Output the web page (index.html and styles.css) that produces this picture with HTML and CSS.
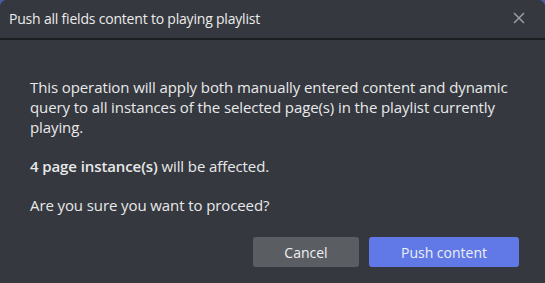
FILE: index.html
```html
<!DOCTYPE html>
<html>
<head>
<meta charset="utf-8">
<link rel="stylesheet" href="styles.css">
</head>
<body>
<div class="dialog">
  <div class="header">
    <span class="title">Push all fields content to playing playlist</span>
    <svg class="close" width="12" height="12" viewBox="0 0 12 12"><path d="M1 1L11 11M11 1L1 11" stroke="#9b9da1" stroke-width="1.5" fill="none"/></svg>
  </div>
  <div class="content">
    <p>This operation will apply both manually entered content and dynamic query to all instances of the selected page(s) in the playlist currently playing.</p>
    <p><b>4 page instance(s)</b> will be affected.</p>
    <p>Are you sure you want to proceed?</p>
  </div>
  <div class="footer">
    <button class="btn cancel">Cancel</button>
    <button class="btn primary">Push content</button>
  </div>
</div>
</body>
</html>
```
FILE: styles.css
```css
html, body {
  margin: 0;
  padding: 0;
  background: #4b5aa3;
}
body {
  width: 545px;
  height: 283px;
  overflow: hidden;
  font-family: "Open Sans", "Noto Sans", sans-serif;
  color: #e8e9ea;
}
.dialog {
  width: 545px;
  height: 283px;
  background: #35383e;
  border-radius: 7px 7px 0 0;
  display: flex;
  flex-direction: column;
}
.header {
  height: 38px;
  border-bottom: 2px solid #1d1e21;
  box-sizing: content-box;
  display: flex;
  align-items: center;
  justify-content: space-between;
  padding: 0 20px 0 9px;
  background: #35383e;
  border-radius: 7px 7px 0 0;
}
.title {
  font-size: 14px;
  color: #ececec;
  letter-spacing: -0.2px;
  margin-top: -2px;
}
.close {
  margin-top: -2px;
}
.content {
  padding: 37px 30px 0 30px;
  font-size: 15px;
  line-height: 20px;
  letter-spacing: -0.1px;
}
.content p {
  margin: 0 0 19px 0;
}
.content b {
  font-weight: 600;
}
.footer {
  display: flex;
  justify-content: flex-end;
  gap: 10px;
  padding: 0 26px 0 0;
  margin-top: auto;
  margin-bottom: 16px;
}
.btn {
  height: 30px;
  border: none;
  border-radius: 3px;
  font-family: "Open Sans", "Noto Sans", sans-serif;
  font-size: 14px;
  color: #eef0f5;
  padding: 0;
}
.cancel {
  width: 106px;
  background: #5a5e62;
}
.primary {
  width: 150px;
  background: #6079e6;
}
```
